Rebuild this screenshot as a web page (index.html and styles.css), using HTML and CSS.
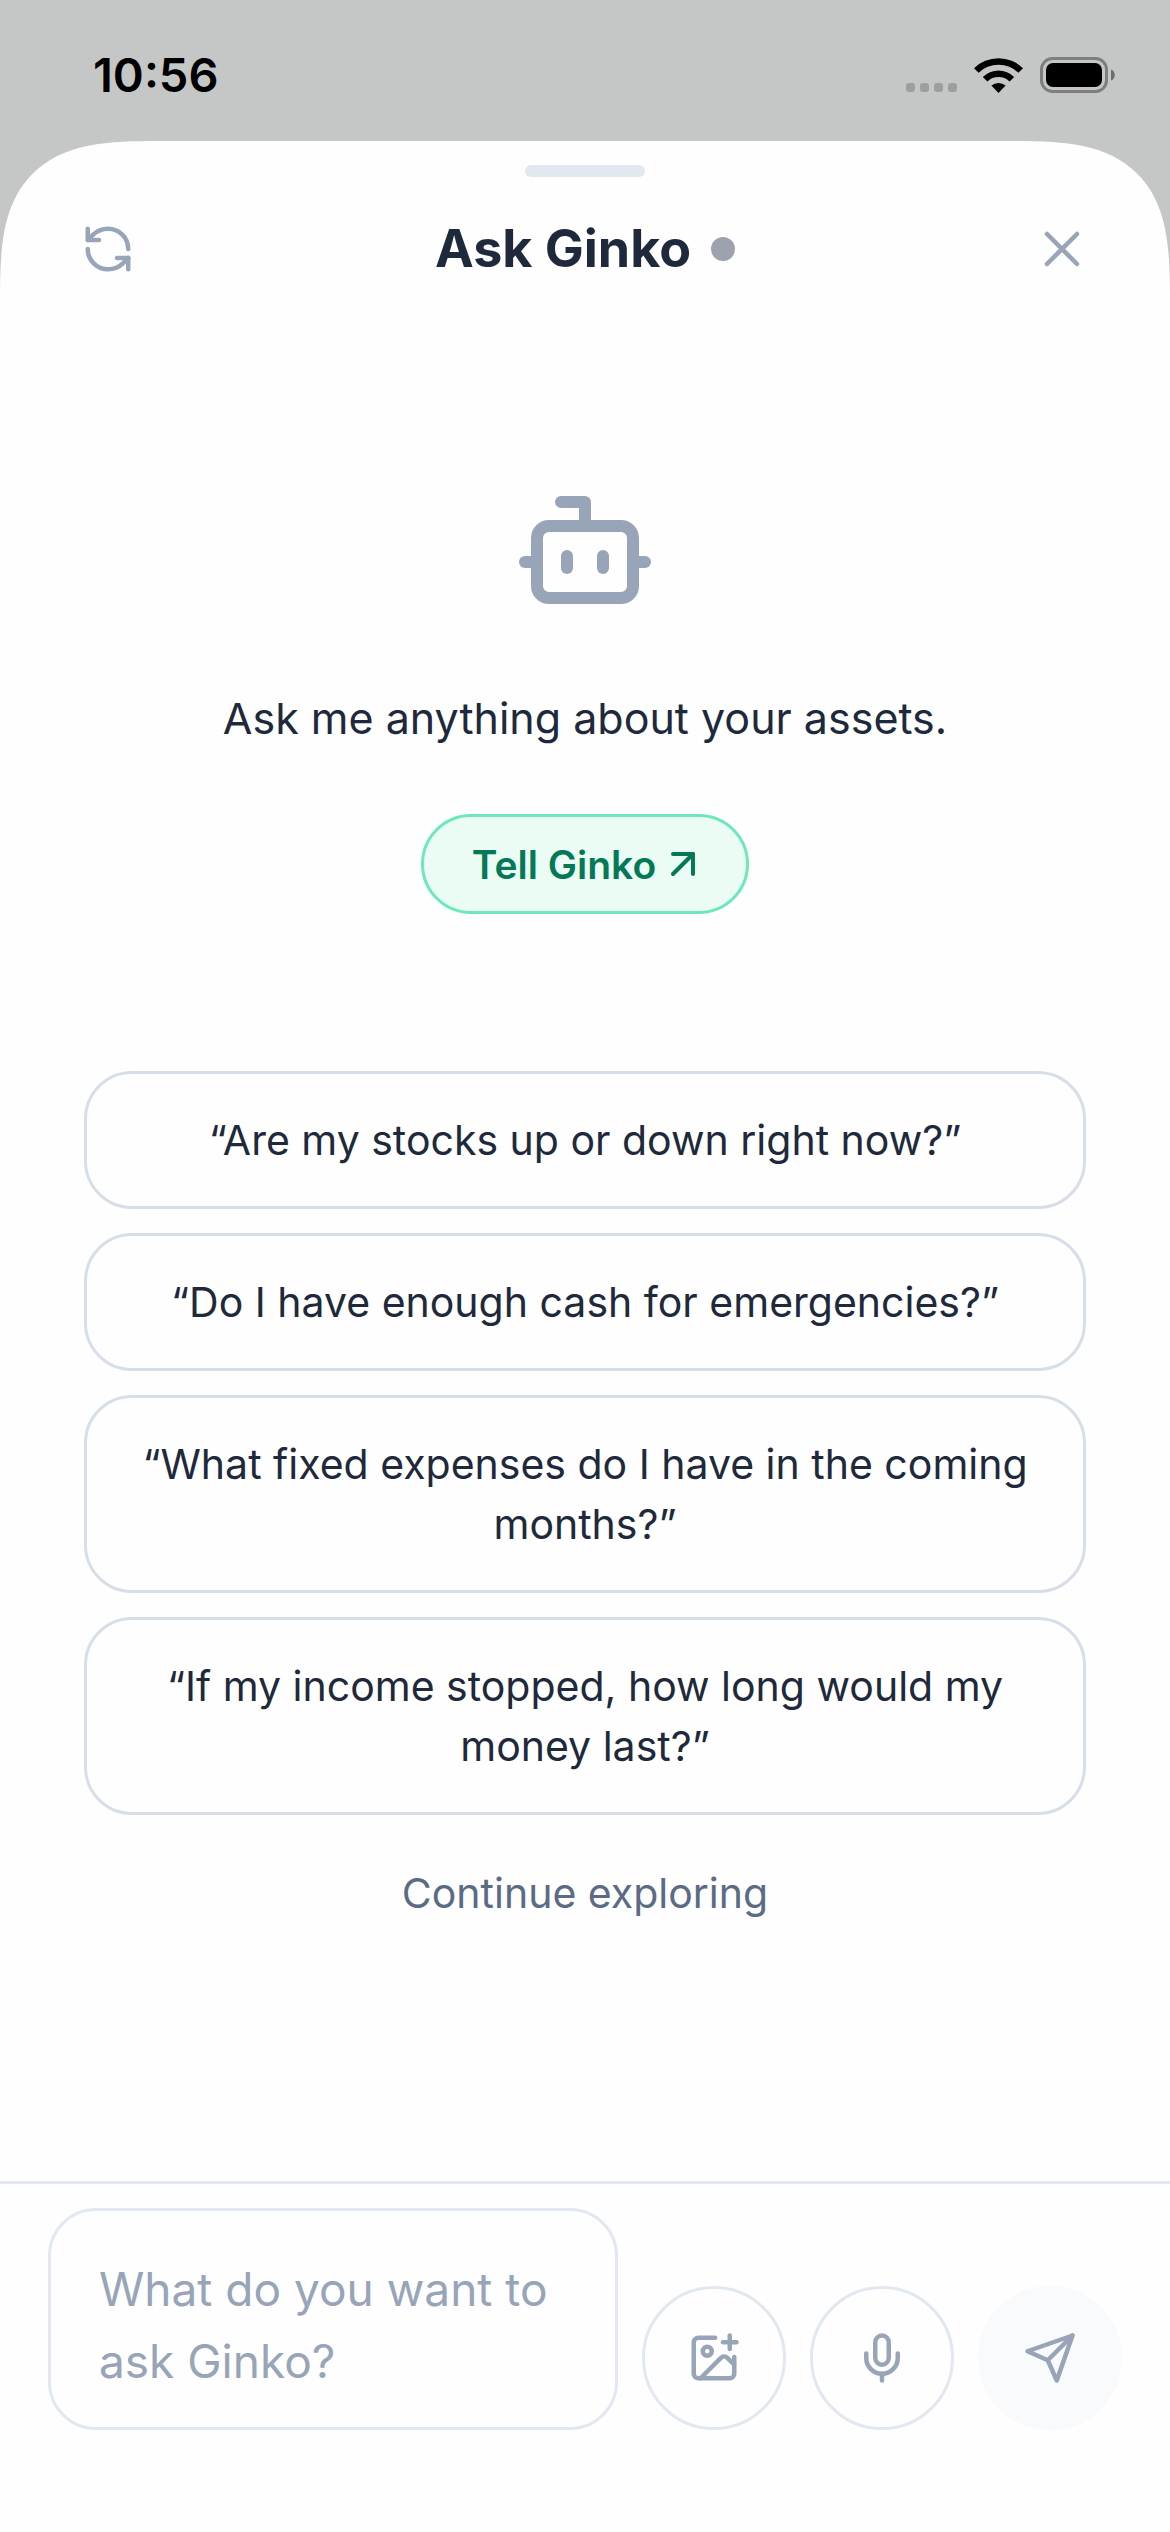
FILE: index.html
```html
<!DOCTYPE html>
<html lang="en">
<head>
<meta charset="utf-8">
<meta name="viewport" content="width=device-width, initial-scale=1">
<title>Ask Ginko</title>
<link rel="stylesheet" href="styles.css">
</head>
<body>
<div class="status-bar">
  <time class="status-time">10:56</time>
  <div class="status-icons">
    <div class="cell-dots"><i></i><i></i><i></i><i></i></div>
    <svg class="wifi" viewBox="0 0 49 36" aria-hidden="true">
      <path d="M0 11.2A35 35 0 0 1 49 11.2L44.4 15.8A28.5 28.5 0 0 0 4.6 15.8Z"/>
      <path d="M8.8 20A22.5 22.5 0 0 1 40.2 20L35.6 24.6A16 16 0 0 0 13.4 24.6Z"/>
      <path d="M17.4 28.6A11 11 0 0 1 31.6 28.6L24.5 36Z"/>
    </svg>
    <svg class="battery" viewBox="0 0 76 36" aria-hidden="true">
      <rect x="1.5" y="1.5" width="65" height="33" rx="11" fill="none" stroke="#7d7e7e" stroke-width="3"/>
      <rect x="6" y="6" width="56" height="24" rx="7"/>
      <path d="M71 12.500C76 14 76 22 71 23.500Z" fill="#6c6d6d"/>
    </svg>
  </div>
</div>
<div class="sheet">
  <div class="handle"></div>
  <header class="header">
    <button class="icon-button" type="button" aria-label="Start over">
      <svg class="icon icon-md" viewBox="0 0 24 24"><path d="M21 12a9 9 0 0 0-9-9 9.750 9.750 0 0 0-6.740 2.740L3 8"/><path d="M3 3v5h5"/><path d="M3 12a9 9 0 0 0 9 9 9.750 9.750 0 0 0 6.740-2.740L21 16"/><path d="M16 16h5v5"/></svg>
    </button>
    <h1 class="title">Ask Ginko<span class="title-dot"></span></h1>
    <button class="icon-button" type="button" aria-label="Close">
      <svg class="icon icon-close" viewBox="0 0 24 24"><path d="M18 6 6 18"/><path d="m6 6 12 12"/></svg>
    </button>
  </header>
  <main class="content">
    <svg class="icon bot" viewBox="0 0 24 24" aria-hidden="true"><path d="M12 8V4H8"/><rect width="16" height="12" x="4" y="8" rx="2"/><path d="M2 14h2"/><path d="M20 14h2"/><path d="M15 13v2"/><path d="M9 13v2"/></svg>
    <p class="intro">Ask me anything about your assets.</p>
    <button class="tell" type="button">Tell Ginko<svg class="icon icon-arrow" viewBox="0 0 24 24"><path d="M7 7h10v10"/><path d="M7 17 17 7"/></svg></button>
    <div class="suggestions">
      <button class="suggestion" type="button">“Are my stocks up or down right now?”</button>
      <button class="suggestion" type="button">“Do I have enough cash for emergencies?”</button>
      <button class="suggestion" type="button">“What fixed expenses do I have in the coming months?”</button>
      <button class="suggestion" type="button">“If my income stopped, how long would my money last?”</button>
    </div>
    <button class="continue" type="button">Continue exploring</button>
  </main>
  <form class="composer">
    <textarea class="composer-input" rows="2" aria-label="Your question" placeholder="What do you want to ask Ginko?"></textarea>
    <button class="round-button" type="button" aria-label="Add image">
      <svg class="icon icon-md" viewBox="0 0 24 24"><path d="M16 5h6"/><path d="M19 2v6"/><path d="M21 11.500V19a2 2 0 0 1-2 2H5a2 2 0 0 1-2-2V5a2 2 0 0 1 2-2h7.500"/><path d="m21 15-3.086-3.086a2 2 0 0 0-2.828 0L6 21"/><circle cx="9" cy="9" r="2"/></svg>
    </button>
    <button class="round-button" type="button" aria-label="Speak">
      <svg class="icon icon-md" viewBox="0 0 24 24"><path d="M12 2a3 3 0 0 0-3 3v7a3 3 0 0 0 6 0V5a3 3 0 0 0-3-3Z"/><path d="M19 10v2a7 7 0 0 1-14 0v-2"/><path d="M12 19v3"/></svg>
    </button>
    <button class="round-button send" type="submit" aria-label="Send">
      <svg class="icon icon-md" viewBox="0 0 24 24"><path d="m22 2-7 20-4-9-9-4Z"/><path d="M22 2 11 13"/></svg>
    </button>
  </form>
</div>
</body>
</html>
```
FILE: styles.css
```css
* { box-sizing: border-box; }

body {
  margin: 0;
  min-height: 100vh;
  display: flex;
  flex-direction: column;
  background: #c5c7c6;
  color: #1e293b;
  font-family: Inter, "Liberation Sans", sans-serif;
}

button {
  margin: 0;
  padding: 0;
  border: 0;
  background: none;
  color: inherit;
  font: inherit;
}

.status-bar {
  height: 141px;
  padding: 8px 54px 0 93px;
  display: flex;
  align-items: center;
  justify-content: space-between;
  color: #000;
}
.status-time { font-size: 47px; font-weight: 600; line-height: 56px; }
.status-icons { display: flex; align-items: center; gap: 17px; }
.cell-dots { display: flex; gap: 5px; padding-top: 25px; }
.cell-dots i { width: 9px; height: 9px; border-radius: 3px; background: #9d9e9e; }
.wifi { width: 49px; height: 36px; }
.battery { width: 76px; height: 36px; }

.sheet {
  flex: 1;
  display: flex;
  flex-direction: column;
  background: #fefefe;
  border-radius: 112px 112px 0 0;
}
/* Continuous corners where the browser can draw them */
@supports (corner-shape: superellipse(1.6)) {
  .sheet {
    border-radius: 160px 160px 0 0;
    corner-shape: superellipse(1.6);
  }
}
.handle {
  width: 120px;
  height: 12px;
  margin: 24px auto 0;
  border-radius: 6px;
  background: #e1e8f0;
}

.header {
  height: 144px;
  padding: 0 78px;
  display: flex;
  align-items: center;
  justify-content: space-between;
}
.icon {
  display: block;
  flex: none;
  fill: none;
  stroke: currentColor;
  stroke-width: 2;
  stroke-linecap: round;
  stroke-linejoin: round;
}
.icon-md { width: 54px; height: 54px; }
.icon-close { width: 60px; height: 60px; stroke-width: 1.8; }
.icon-button {
  width: 60px;
  height: 60px;
  display: grid;
  place-items: center;
  color: #98a4b8;
}
.title {
  margin: 0;
  display: flex;
  align-items: center;
  gap: 20px;
  font-size: 52px;
  font-weight: 700;
  line-height: 72px;
}
.title-dot { width: 24px; height: 24px; border-radius: 50%; background: #9ca3af; }

.content {
  flex: 1;
  padding: 157px 84px 0;
  display: flex;
  flex-direction: column;
  align-items: center;
}
.bot { width: 144px; height: 144px; color: #98a4b8; }
.intro {
  margin: 60px 0;
  font-size: 43px;
  line-height: 72px;
  text-align: center;
}
.tell {
  height: 100px;
  padding: 0 39px 0 48px;
  display: flex;
  align-items: center;
  gap: 3px;
  border: 3px solid #6ce8b9;
  border-radius: 50px;
  background: #eafcf4;
  color: #047857;
  font-size: 39px;
  font-weight: 600;
}
.icon-arrow { width: 48px; height: 48px; }

.suggestions {
  align-self: stretch;
  margin-top: 157px;
  display: flex;
  flex-direction: column;
  gap: 24px;
}
.suggestion {
  padding: 36px 48px;
  border: 3px solid #d6dfe8;
  border-radius: 48px;
  font-size: 41px;
  line-height: 60px;
  text-align: center;
}
.continue {
  margin: 48px 0;
  color: #5c6b85;
  font-size: 41px;
  line-height: 60px;
}

.composer {
  padding: 24px 48px 102px;
  display: flex;
  align-items: flex-end;
  gap: 24px;
  border-top: 3px solid #e1e8f0;
}
.composer-input {
  flex: 1;
  min-width: 0;
  height: 222px;
  padding: 42px 48px 30px;
  border: 3px solid #e1e8f0;
  border-radius: 48px;
  background: none;
  color: inherit;
  font: inherit;
  font-size: 46px;
  line-height: 72px;
  resize: none;
  overflow: hidden;
}
.composer-input::placeholder { color: #98a4b8; opacity: 1; }
.round-button {
  flex: none;
  width: 144px;
  height: 144px;
  display: grid;
  place-items: center;
  border: 3px solid #e1e8f0;
  border-radius: 50%;
  color: #98a4b8;
}
.send { border-color: #f9fafc; background: #f9fafc; }
```
